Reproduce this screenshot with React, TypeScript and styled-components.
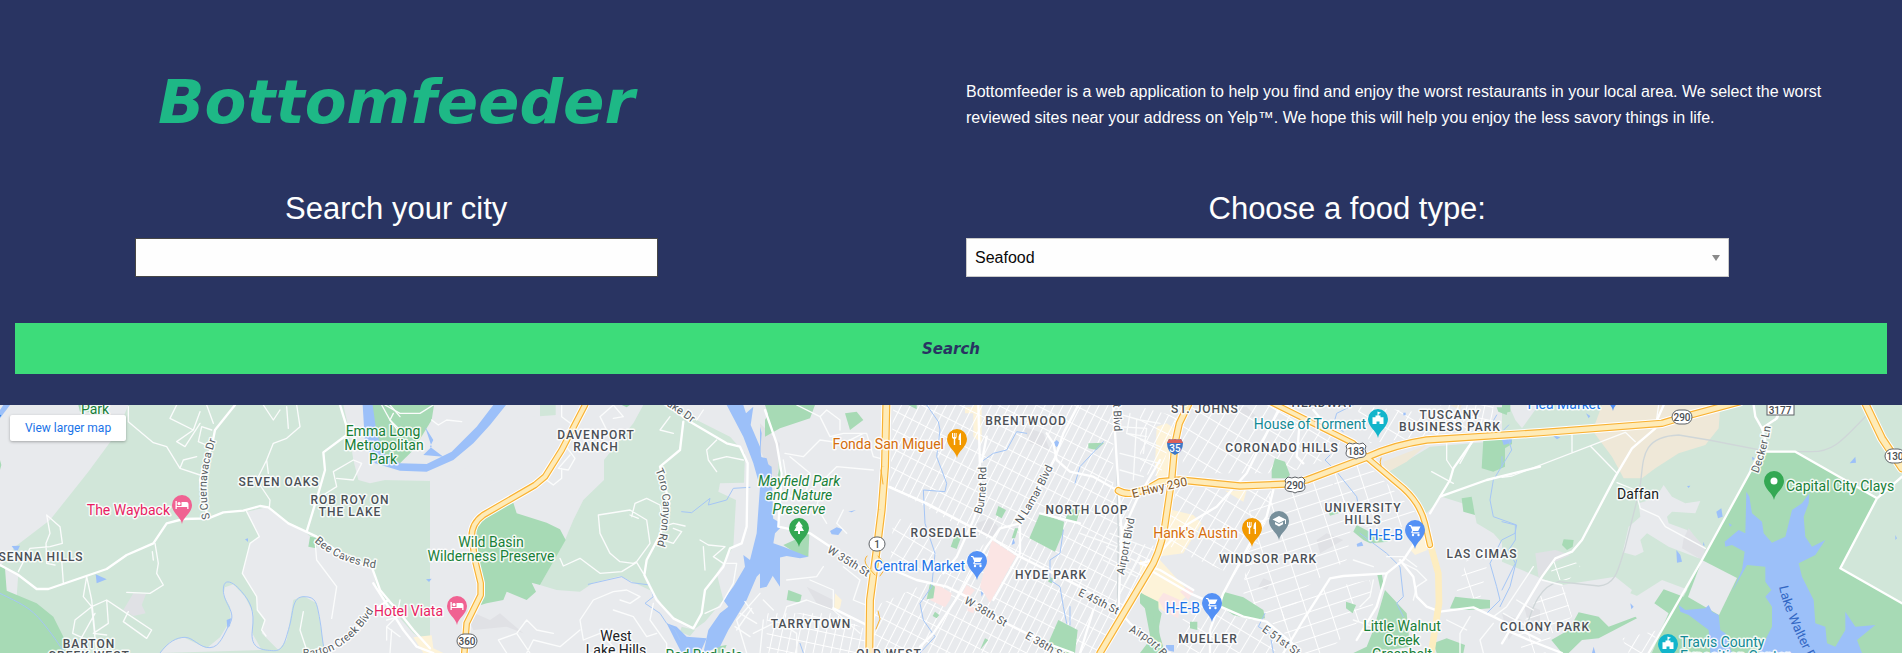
import React from 'react';
import styled, { createGlobalStyle } from 'styled-components';

const GlobalStyle = createGlobalStyle`
  *, *::before, *::after { box-sizing: border-box; }
  body {
    margin: 0;
    background: #293462;
    color: #fefefe;
    font-family: "Liberation Sans", Arial, sans-serif;
    font-size: 16px;
  }
`;

const Page = styled.div`
  display: flex;
  flex-direction: column;
  min-height: 100vh;
`;

const Form = styled.form`
  padding: 52px 0 31px;
`;

const Row = styled.div`
  display: grid;
  grid-template-columns: repeat(12, 1fr);
`;

const Cell = styled.div<{ $start: number; $span: number }>`
  grid-column: ${(p) => p.$start} / span ${(p) => p.$span};
  padding: 0 15px;
  text-align: center;
`;

const Logo = styled.h1`
  margin: 0;
  color: #1eb886;
  font: italic 700 61px/100px "DejaVu Sans", sans-serif;
`;

const Intro = styled.p`
  margin: 27px 0 25px;
  line-height: 26px;
  text-align: left;
`;

const FieldLabel = styled.label`
  display: block;
  margin: 32px 0 8px;
  font-size: 31px;
  line-height: 42px;
`;

const CityInput = styled.input`
  display: block;
  width: calc(68% + 4px);
  height: 39px;
  margin: 0 auto;
  padding: 8px;
  border: 1px solid #464646;
  border-radius: 0;
  background: #fefefe;
  color: #0a0a0a;
  font: inherit;
`;

const SelectBox = styled.div`
  position: relative;
  &::after {
    content: '';
    position: absolute;
    right: 9px;
    top: 17px;
    border: solid transparent;
    border-width: 6px 4px 0;
    border-top-color: #8a8a8a;
    pointer-events: none;
  }
`;

const FoodSelect = styled.select`
  display: block;
  appearance: none;
  width: 100%;
  height: 39px;
  padding: 0 24px 0 8px;
  border: 1px solid #cacaca;
  border-radius: 0;
  background: #fefefe;
  color: #0a0a0a;
  font: inherit;
`;

const SearchButton = styled.button`
  display: block;
  width: calc(100% - 30px);
  height: 51px;
  margin: 46px 15px 0;
  border: 0;
  background: #3ddc7a;
  color: #293462;
  font: italic 700 15px "DejaVu Sans", sans-serif;
  cursor: pointer;
`;

const MapFrame = styled.section`
  position: relative;
  flex: 1;
  min-height: 248px;
  overflow: hidden;
  background: #e8eaed;
`;

const MapSvg = styled.svg`
  position: absolute;
  inset: 0;
  width: 100%;
  height: 100%;
`;

const LargerMapLink = styled.a`
  position: absolute;
  left: 10px;
  top: 10px;
  width: 116px;
  border-radius: 2px;
  background: #fff;
  box-shadow: 0 1px 3px rgba(0, 0, 0, 0.3);
  color: #1a73e8;
  font: 12px/26px Roboto, sans-serif;
  text-align: center;
  text-decoration: none;
`;

type LabelKind = 'hood' | 'town' | 'park' | 'food' | 'shop' | 'hotel' | 'fun' | 'road' | 'highway' | 'water';

const labelColor: Record<LabelKind, string> = {
  hood: '#4b5056', town: '#202124', park: '#188038', food: '#d56e0c', shop: '#1a73e8',
  hotel: '#e91e63', fun: '#128a96', road: '#565b60', highway: '#80551f', water: '#3267c4',
};

const labelSize: Record<LabelKind, number> = {
  hood: 12, town: 14, park: 14, food: 14, shop: 14, hotel: 14, fun: 14, road: 11, highway: 12, water: 13,
};

const MapText = styled.text<{ $kind: LabelKind; $italic?: boolean }>`
  fill: ${(p) => labelColor[p.$kind]};
  font-family: Roboto, sans-serif;
  font-size: ${(p) => labelSize[p.$kind]}px;
  font-weight: ${(p) => (p.$kind === 'hood' ? 500 : 400)};
  font-style: ${(p) => (p.$italic ? 'italic' : 'normal')};
  letter-spacing: ${(p) => (p.$kind === 'hood' ? '1px' : 'normal')};
  stroke: ${(p) => (p.$kind === 'water' ? 'none' : '#fff')};
  stroke-width: 3px;
  stroke-linejoin: round;
  stroke-opacity: 0.85;
  paint-order: stroke;
`;

const ShieldText = styled.text<{ $light?: boolean }>`
  fill: ${(p) => (p.$light ? '#fff' : '#4a4e52')};
  stroke: none;
  font: 500 10px Roboto, sans-serif;
  text-anchor: middle;
`;

/* Map features are surveyed on five sheets, each at three units to the pixel. */
type Sheet = {
  x: number;
  light?: string[]; land?: string[]; tan?: string[]; built?: string[]; clinic?: string[]; sand?: string[];
  park?: string[]; water?: string[]; creek?: string[]; grid?: [string, string][];
  lane?: string[]; street?: string[]; rail?: string[];
};

const sheets: Sheet[] = [
  {
    x: 0,
    light: ['M385 15L350 100 265 215 150 360 45 440 0 500V759H1290V15Z'],
    land: [
      'M1030 15L1045 80 1060 180 1075 240 1110 250 1210 228V15Z',
      'M700 553L735 590 760 640 757 700 785 750 480 759 510 725 550 712 620 745 660 712 692 660 690 620 670 585 675 562Z',
      'M740 335L778 410 750 430 727 520 770 590 772 630 795 660 785 700 835 750 860 720 880 600 910 588 950 610 975 759H1320L1240 700 1170 620 1130 560 1115 500 1050 480 950 430 920 400 860 370 800 322Z',
      'M10 500L55 520 50 590 20 575Z',
      'M0 15H20L12 45 0 55Z',
    ],
    built: ['M400 580L438 582 425 615 437 640 400 648 370 630Z'],
    park: [
      'M0 500L15 505 20 572 110 610 160 650 195 720 200 759H0Z',
      'M235 15H300L325 40 240 35Z', 'M930 410L955 415 948 445 925 440Z', 'M335 110L320 122H360Z',
      'M0 180L4 195 0 210Z',
    ],
    water: ['M35 438L60 437 50 458Z', 'M287 523L320 538 290 550Z', 'M735 418L744 415 744 426Z', 'M0 30L10 15H30L0 55Z', 'M680 660L693 655 690 678 682 685Z'],
    creek: [
      'M0 580C60 610 90 620 130 670S180 740 195 759', 'M480 759C505 725 530 712 555 712S600 745 630 743 670 705 690 670 670 610 670 570 700 545 725 575 765 630 757 690 790 750 820 752 855 725 868 680 875 590 912 590 950 610 958 650 965 720 975 759',
    ],
    lane: [
      'M385 20V65L460 128 500 140 540 205 600 225M540 205L550 180 590 170M530 15L510 55 580 90 600 35M580 90L530 125 555 140 600 70M620 15L640 70M605 80L595 125 630 140M605 80L635 90',
      'M890 15L900 80 860 115 820 130 800 180 805 220M860 20L865 85M790 15L820 60 840 30M800 180L770 240 810 300 808 322',
      'M140 345L180 380 187 430 150 440 90 445 55 515M140 345L150 400 138 430 140 490 165 495M185 480L190 548M465 430L475 490 470 520 490 555 450 580 380 577 M460 480L457 455',
      'M260 530L250 590 275 620 290 759M260 530L275 600 285 700M275 620L225 660 218 700 245 712 285 640M275 620L320 600 380 640 455 690 440 715 370 665 385 635M320 600L325 670 280 700 320 705',
      'M740 335L778 410 750 430 727 520 770 590 772 630 795 660 785 690 798 708M945 420L950 480 1010 560 995 655M910 635L900 690 920 750M1160 660L1200 650M1170 759L1175 690',
      'M970 285L1010 260 1000 215 1060 180 1085 190 1060 240 1010 235M1145 15L1170 60 1200 90M1170 15L1200 50',
    ],
    street: [
      'M0 495L55 525 110 567 145 567 320 507 380 465 460 430 500 370 550 357 625 355 670 337 730 332 780 318 805 322 865 370 950 410 1050 480 1115 500 1140 570 1165 600 1200 640 1240 690 1290 745',
      'M625 355L610 300 600 240 615 190 635 140 645 90 705 15', 'M1020 15L1040 80 1040 105 970 157 975 210 955 280 920 395', 'M1165 600L1110 640 1060 700 980 759',
    ],
  },
  {
    x: 380,
    light: [
      'M320 105L370 65 415 15H527V45L385 190Z',
      'M790 15L760 70 715 125 672 180V240L610 300 580 360 555 420 480 555 530 570 600 575 640 548 720 528 820 575 850 620 900 670 940 690 975 665 1030 600 1010 520 1060 440 1068 300 1015 275 1020 250 1092 248 1095 160 1050 110 950 60 880 15Z',
      'M155 60L230 15 265 70 180 150Z', 'M905 680L945 690 930 708 900 695Z',
    ],
    land: [
      'M0 240L155 243 210 235 300 175 318 185V230L245 285V320L220 340 215 460 230 545 190 555 205 585 280 625 245 759H480V15H140L50 180 0 190Z',
      'M318 60L530 45 550 250 320 240Z',
    ],
    sand: ['M100 712L155 706 160 745 190 759H130Z'],
    built: ['M250 625L330 660 360 640 430 700 380 680 280 690Z'],
    park: [
      'M-35 15H162L155 60 100 150 60 190 -20 180 -45 120Z', 'M400 308L410 340 500 368 540 388 557 420 480 555 455 548 468 575 440 600 380 575 370 600 320 610 270 625 302 560 280 480 290 350Z',
      'M1155 15H1200V80L1170 60Z', 'M725 15H750L740 22Z', 'M1010 740L1040 735 1030 759H1000Z',
    ],
    water: [
      'M-52 15H-22L-10 100 15 165 60 190 140 192 215 155 290 80 340 15H378L330 75 280 130 220 180 140 215 60 212 -15 190 -45 130Z',
      'M1040 15H1090L1098 40 1120 20 1112 75 1140 140 1145 180 1175 200 1180 380 1165 450 1172 480 1200 455V560L1160 500 1130 530 1100 600 1045 690 1020 740 970 759 985 690 1020 640 1045 620 1030 600 1060 560 1095 500 1090 465 1110 480 1130 400 1140 260 1120 190 1090 110Z',
      'M138 538L155 536 147 546Z', 'M1060 560H1080V570H1055Z', 'M135 80L160 120 150 140 190 170 130 165 155 140Z', 'M860 670L890 680 920 710 980 715 960 759H905L885 720Z',
    ],
    creek: ['M905 335L935 338 990 295 985 315 1040 300 1060 265 1110 262', 'M625 553L725 530 755 548 810 555 820 590 795 610 840 640 860 670 885 690 900 720'],
    lane: [
      'M545 15V50L585 80 540 100M660 50L700 15 730 50 700 55M660 50L680 90M555 135L585 175 565 210 535 205 570 165M500 240L520 255 545 235 545 205M15 15L60 40 120 40 160 15M155 60L175 75 200 60 245 65M60 100L30 60 40 40',
      'M755 350L765 310 800 295 840 315 850 380M655 345L750 330 800 360 810 430 770 485 760 490 720 485 690 460 660 400ZM750 345L775 355M850 380L880 370 915 378M850 420L880 430 905 395 880 385M540 475L550 498 600 475 660 520 725 515 770 487 790 520M960 420L985 435 1035 440 1000 470 1030 490M970 440L975 510M1010 120L980 150 985 180 1010 215M1000 180L1040 170 1090 180M880 100L840 90 870 50M950 60L970 30',
      'M1040 490L1070 490 1060 550 1020 620 975 640M600 660L640 600 700 575 740 570 780 590 750 610 720 600M600 660L610 720 660 700 700 740M380 759L355 720 410 700 440 660 470 690 520 700M440 759L460 720 540 740 600 690M820 610L810 660 860 730 860 759M700 630L760 650 800 710 830 700M410 700L450 759',
      'M1115 625L1070 690M1095 605L1120 640M1080 640L1130 670M1065 680L1110 710M1140 580L1070 660 1100 759M1150 600L1180 630M1120 700L1180 670M1140 759L1150 660',
      'M20 680L50 650 60 600M0 640L30 620M20 720L20 680 60 710',
    ],
    street: ['M860 15L930 65 1040 130 1080 140 1103 190 1100 380 1085 430 1050 445 1030 500 975 570 965 640 940 685 880 655 830 600 793 525 800 480 840 405 868 310 840 200 900 150 910 65', 'M-20 550L70 690 110 740 160 759'],
  },
  {
    x: 760,
    light: ['M50 130L70 220 60 240 50 200Z'],
    built: ['M650 370L690 355 715 380 700 410 650 400ZM140 560L220 600 230 640 170 610ZM790 80L850 100 870 150 810 130Z', 'M0 70L60 130 50 250 0 150Z'],
    sand: ['M225 580L245 600 240 625 222 635ZM640 15H665V130L640 110ZM615 22H640V40H615ZM1190 120H1240V250H1190ZM1140 500L1200 480 1290 580 1220 640 1160 600Z'],
    clinic: ['M695 420L768 468 690 608 660 560Z', 'M525 550L575 580 570 600 555 622 510 600Z', 'M620 555L645 570 620 600 605 585ZM625 615L645 625 640 640 622 632Z'],
    park: [
      'M40 15H165L150 55 60 85 15 110 15 60Z', 'M255 40L290 35 310 60 270 90Z', 'M148 400L145 470 115 465 70 435Z', 'M85 570L125 585 120 608 80 600Z', 'M840 340L912 365 908 400 885 455 808 415Z',
      'M715 318L738 330 725 355 707 345Z', 'M585 405L602 415 590 447 572 440Z', 'M765 385H775L765 415H755Z', 'M895 660L953 690 945 759H910L862 735Z', 'M510 550L525 560 520 595 500 598Z', 'M985 130L1033 128 1010 150 985 145Z', 'M930 325L960 330 950 365 915 360Z', 'M445 15H470V28Z', 'M525 635L538 645 530 655 518 648ZM865 530L880 535 875 550 865 545Z', 'M675 715L685 720 660 750Z', 'M60 205L68 225 60 245 53 225Z', 'M1135 575L1195 605 1200 759H1180L1150 600Z',
    ],
    water: ['M0 80L5 100 0 170 20 175 35 230 30 350 55 365 60 385 45 400 40 430 70 440 145 470 120 475 80 468 50 475 45 515 20 560 0 565Z', 'M210 393L230 382 248 388 235 405 215 403Z', 'M880 130L890 120 900 130 890 142Z', 'M760 415L765 430 755 435ZM662 572L670 580 665 590Z', 'M265 335L288 330 275 337Z'],
    creek: ['M500 15L535 65 540 90 530 170 560 250 555 275 490 270 495 370 525 460 515 560 480 610 490 660 525 710 480 759', 'M800 100L770 95 740 150 700 160 665 185', 'M1030 125L960 200 945 250', 'M910 390L900 460 870 480 870 540 900 560 910 620 920 670M930 620L930 675', 'M130 759L120 730'],
    grid: [
      ['a', 'M400 15H1060V270L1120 290 1080 420 1200 440 1010 759H340V620L520 540 690 420 600 380 390 260Z'],
      ['c', 'M20 640L220 640 320 690V759H20Z'],
      ['b', 'M400 350L550 400 510 520 390 500Z'],
    ],
    lane: [
      'M110 15L180 50 210 110 250 100 320 100 340 170 360 175M75 160L130 170 180 120 250 130 310 100M180 50L200 30 240 60 240 90M70 180L80 240 90 290 140 270 150 220 90 170M200 370L170 320 190 240 230 200 340 210M250 330L230 370 260 400M190 500L170 530 80 540M300 700L220 630 220 570 150 540M250 500L300 540 280 600 330 620M110 759V700L65 670 80 620 140 600 220 630',
      'M1080 15L1070 40 1140 60 1200 70M1110 40L1100 100 1200 140M1070 80L1160 85 1150 160M1080 160L1200 190M1130 60L1120 240M1080 210L1150 230M1100 100L1160 110',
      'M1140 470L1080 580M1050 400L1180 450M1040 440L1160 500M1030 480L1130 530M960 400L1070 440',
    ],
    street: [
      'M15 30L50 130 65 220 55 380 150 400 240 460 310 510 400 510 470 540 560 560 620 590 735 668 860 730 940 759', 'M655 15L660 210 665 290 640 360 590 470 550 520M665 185L680 110',
      'M955 15L910 100 885 175 830 280 780 370 720 385 680 440 600 580 520 700 480 740', 'M860 100L880 130 890 180 930 215 1000 230 1070 270', 'M385 260L500 310 690 410 780 470 960 560 1070 625 1110 670 1200 740', 'M1060 15L1070 180 1085 400 1075 640', 'M1200 180L1130 300 1085 400', 'M780 370L780 460 700 600', 'M840 340L960 370', 'M220 625L330 680', 'M1000 630L960 759',
    ],
    rail: ['M1070 200L1075 400 1072 640'],
  },
  {
    x: 1140,
    light: ['M745 215L870 140 1290 105V500H1180L1150 500 1060 400 1010 370 1000 320 905 290 860 340 820 300Z'],
    tan: ['M730 185L860 135 800 185 740 218Z', 'M930 15H965L960 30Z'],
    sand: ['M50 80L80 70 110 90 95 220 45 200Z', 'M75 325L160 345 185 370 130 460 50 470Z', 'M255 272H320L310 305Z', 'M15 510L100 550 60 620 0 590Z', 'M830 400L850 400 862 450 825 465 812 450Z', 'M0 480L50 500 0 560Z'],
    clinic: ['M70 578L120 600 115 655 75 635 55 600ZM120 575L140 562 160 575 145 600Z'],
    built: ['M530 420L560 400 610 420 540 460ZM370 535L395 545 380 570 355 560ZM255 25L320 20 360 60Z', 'M1150 610L1200 630V680L1160 650Z'],
    park: [
      'M405 175L435 185 450 225 440 235 395 235V210Z', 'M250 575L310 592 370 630 375 655 340 660 280 645 245 620Z', 'M712 525L725 520 732 560 722 570Z', 'M735 570L800 640 810 740 690 759H640L680 740 700 690Z', 'M650 375L745 425 690 430 670 420 640 395Z',
      'M1030 120H1095V200L1060 215 1025 205Z', 'M965 295L995 290 1005 345 970 335Z', 'M945 590L985 595 1050 600 1050 625 985 630 930 625Z', 'M880 730L920 715 975 735 970 759H890Z', 'M0 575L30 600 65 640 55 690 75 759H0L45 700 40 650 0 610Z', 'M150 665H172V690L150 685Z', 'M1070 22H1105L1100 45 1075 35Z', 'M565 335L610 335 570 347Z', 'M618 605L648 615 638 640 618 625Z',
    ],
    water: ['M650 432L665 425 670 437 652 440Z', 'M790 38H797V46H790Z', 'M78 735H102V755L78 750Z'],
    creek: ['M640 15L590 40 580 75 610 95M570 165L555 180 590 215 650 290 655 315 700 320M660 400L740 460 780 500 790 590 770 610 790 650', 'M1070 45L1050 80 1100 100 1115 150 1060 240 1050 300 1060 350 1130 375 1125 400 1085 420 1050 490 1070 560 1080 600 1040 640M1130 480L1110 560 1080 620', 'M375 640L355 680 390 700 400 759'],
    grid: [
      ['b', 'M120 15H390L600 120 600 165 440 220 130 220Z'], ['b', 'M110 260L420 275 390 330 320 540 150 470 70 430 100 310Z'], ['d', 'M330 300L560 230 640 330 620 480 500 560 420 690 310 590Z'],
      ['d', 'M560 200L680 190 830 340 820 380 640 380Z'], ['b', 'M160 600L240 620 340 665 430 720 400 759H110V690Z'], ['d', 'M420 590L690 540 700 620 560 759H440Z'],
      ['b', 'M650 20L690 20 860 40 1040 60 1020 90 840 110 690 130Z'], ['d', 'M980 480L1040 500 1020 600 945 590Z'], ['c', 'M900 15L930 60 1060 80 1060 15Z'], ['a', 'M0 20L110 50 60 230 0 220Z'],
    ],
    lane: [
      'M790 490L830 510 860 540 830 560 820 600M830 500L790 470 740 470M640 480L700 500M920 130V180L940 210M875 215L940 250M1000 120L960 190M700 540L690 590 660 620M640 660L700 680M990 650L960 700 960 759M1060 670L1020 720 1030 759M920 660L980 690',
      'M1180 500L1100 620 1060 650M1130 600L1180 630M1090 640L1200 700',
    ],
    street: [
      'M430 0L370 120 320 220 230 320 130 380 40 480 0 490', 'M400 270L380 350 330 430 250 580 210 690 210 759', 'M30 510L150 580 310 650 380 665 480 750', 'M430 759L490 660 570 535 610 528 740 520 790 480 830 420', 'M0 490L60 510 160 570', 'M740 520L710 620 650 720', 'M780 480L820 530 830 590 860 620 900 635 1000 622 1060 650 1200 720', 'M870 340L930 240 940 205 1000 120', 'M900 290L1040 240 1200 200', 'M490 190L470 170 480 60 440 15M520 30L570 90',
    ],
  },
  {
    x: 1502,
    light: ['M0 15H1200V759H0Z'],
    land: [
      'M0 485L130 540 180 555 340 530 390 570 385 580 460 610 500 640 440 759H0Z', 'M485 255L510 290 550 310 595 303 580 340 510 335 495 350 500 370 555 390 600 445 590 475 500 440 435 400 415 420 425 455 400 467 362 457 380 380 415 350 410 310 460 295Z', 'M20 15H110L60 85 40 60Z', 'M370 610L480 540 560 570 520 600 480 610Z',
    ],
    tan: ['M300 15H655L650 85 610 135 530 160 460 205 420 235H365L330 170 270 90 280 70Z'],
    built: ['M100 460L160 450 205 465 150 490 110 535Z', 'M545 415L560 385 575 405 610 445 600 480 540 445Z', 'M0 640L60 660 20 720Z'],
    park: [
      'M790 155H880L1125 295 1015 505 1200 610V759H450L500 640 457 610 485 568 545 590 600 480 740 220Z', 'M185 418L215 420 212 440 195 450 180 435Z', 'M230 637L290 650 320 680 400 650 405 655 290 715 240 720 200 759H180L148 720 200 690Z', 'M0 15H25V35L0 40Z', 'M0 120H30V132L0 150Z',
    ],
    water: [
      'M733 275L742 290 750 340 780 365 785 400 810 428 850 410 870 330 900 310 922 280 920 310 905 350 910 410 930 440 970 420 940 465 890 490 900 530 935 600 940 670 970 680 975 730 1000 740 1030 690 1030 635 1060 680 1120 675 1065 720 1080 759H770L810 680 810 620 790 590 808 570 790 545 790 500 735 495 690 575 720 510 728 455 690 435 670 440 668 425 710 390 730 400Z',
      'M530 615L550 630 610 625 620 615 630 635 650 645 655 690 670 700 690 759H625L620 690 560 645 535 635Z', 'M643 335L658 325 662 350 648 355Z', 'M523 450L535 465 540 485 525 488Z', 'M1043 190L1060 170 1062 188Z', 'M150 105L175 112 165 118Z', 'M385 610L395 620 388 628Z', 'M252 40L265 48 260 55ZM555 258L565 257 560 264ZM680 370L690 375 684 380ZM750 170L758 175 752 182ZM1180 405L1185 415 1180 420ZM605 425L608 437 603 436Z', 'M0 120L30 115 28 128 5 135Z', 'M275 740L280 759H270Z',
    ],
    creek: ['M0 365L40 375 40 420 20 450 40 490 0 570', 'M20 75L0 95', 'M0 170V200'],
    grid: [['d', 'M150 490L200 465 235 500 200 540 145 540Z'], ['d', 'M145 560L185 560 210 650 150 700 130 759H60L50 700 100 600Z'], ['b', 'M360 715L430 700 470 690 440 759H380Z']],
    lane: ['M210 98V155M265 138L345 220M0 232L30 228 370 97 400 125M345 248L400 270 415 325 470 350 490 380 610 445M460 85L470 15M120 540L180 555M820 60L825 45'],
    street: ['M485 15L465 60 460 85 390 145 340 230 240 420 210 455 160 475 120 530 0 730', 'M755 15L760 50 780 85 790 120 745 215 600 480 520 620 440 759', 'M780 85L825 55 830 40', 'M790 155H880L1125 295 1200 230M1125 295L1015 505 1200 610', 'M0 685L80 720 180 759'],
    rail: ['M1090 50C1030 110 1000 155 930 155H800L620 120 530 105C400 110 430 200 410 280L370 440C350 500 345 555 290 558L170 545C110 560 90 630 80 660'],
  },
];

type Layer = Exclude<keyof Sheet, 'x' | 'grid'>;

const Shapes = ({ layer, fill }: { layer: Layer; fill: string }) => (
  <g fill={fill}>
    {sheets.map((s) => (
      <g key={s.x} transform={`translate(${s.x} 400) scale(${1 / 3})`}>
        {(s[layer] ?? []).map((d) => <path key={d} d={d} />)}
      </g>
    ))}
  </g>
);

const Lines = ({ layer, stroke, width }: { layer: Layer; stroke: string; width: number }) => (
  <g fill="none" stroke={stroke} strokeWidth={width} strokeLinejoin="round" strokeLinecap="round">
    {sheets.map((s) => (
      <g key={s.x} transform={`translate(${s.x} 400) scale(${1 / 3})`}>
        {(s[layer] ?? []).map((d) => <path key={d} d={d} />)}
      </g>
    ))}
  </g>
);

const Grids = () => (
  <>
    {sheets.map((s) => (
      <g key={s.x} transform={`translate(${s.x} 400) scale(${1 / 3})`}>
        {(s.grid ?? []).map(([id, d]) => <path key={d} d={d} fill={`url(#blocks-${id})`} />)}
      </g>
    ))}
  </>
);

const highways: [number, string, number][] = [
  [380, 'M615 15L545 150 495 230 465 255 310 345Q275 370 275 410L285 480 302 550V585L260 670 253 759', 18],
  [760, 'M379 15L375 200 365 330 350 450 330 600 328 759', 22],
  [1140, 'M152 0L118 70 105 130 95 240 80 340Q70 430 40 490L-120 759', 20],
  [1140, 'M-65 272Q-50 282 -25 280L20 268 60 245 120 240 300 258 440 252 500 240 680 172Q760 135 860 120L1200 98 1566 70 1626 52 1800 5', 20],
  [1140, 'M380 0L640 130 680 172 790 265Q840 310 855 370L870 435', 17],
  [1502, 'M1085 0L1140 115 1200 205', 22],
];

const Highways = () => (
  <g fill="none" strokeLinejoin="round" strokeLinecap="round">
    <path transform="translate(1140 400) scale(0.33333)" d="M870 430L895 520 897 610 872 770" stroke="#fdedc0" strokeWidth="20" />
    {[['#fff', 8], ['#f9b233', 2], ['#feebb8', -5]].map(([color, grow]) => (
      <g key={color} stroke={String(color)}>
        {highways.map(([x, d, w]) => (
          <path key={d} d={d} strokeWidth={w + Number(grow)} transform={`translate(${x} 400) scale(0.33333)`} />
        ))}
      </g>
    ))}
    <g stroke="#f9b233" strokeWidth="1">
      <path d="M867 556q-4 4 0 10l8 9M878 556q12 10 2 20M881 470l2 14M878 611l2 8-4 10M1381 458q-2 4 0 8" />
    </g>
  </g>
);

type Label = [LabelKind, number, number, string, ('start' | 'middle' | 'end')?, boolean?];

const labels: Label[] = [
  ['park', 95, 414, 'Park'], ['park', 383, 436, 'Emma Long'], ['park', 384, 450, 'Metropolitan'], ['park', 383, 464, 'Park'],
  ['hood', 279, 486, 'SEVEN OAKS'], ['hood', 350, 504, 'ROB ROY ON'], ['hood', 350, 516, 'THE LAKE'], ['hood', 41, 561, 'SENNA HILLS'],
  ['hood', 89, 648, 'BARTON'], ['hood', 89, 660, 'CREEK WEST'], ['hotel', 170, 515, 'The Wayback', 'end'], ['hotel', 443, 616, 'Hotel Viata', 'end'],
  ['hood', 596, 439, 'DAVENPORT'], ['hood', 596, 451, 'RANCH'], ['park', 491, 547, 'Wild Basin'], ['park', 491, 561, 'Wilderness Preserve'],
  ['town', 616, 641, 'West'], ['town', 616, 655, 'Lake Hills'], ['park', 704, 660, 'Red Bud Isle'],
  ['park', 799, 486, 'Mayfield Park', 'middle', true], ['park', 799, 500, 'and Nature', 'middle', true], ['park', 799, 514, 'Preserve', 'middle', true],
  ['food', 944, 449, 'Fonda San Miguel', 'end'], ['hood', 1026, 425, 'BRENTWOOD'], ['hood', 944, 537, 'ROSEDALE'], ['shop', 965, 571, 'Central Market', 'end'],
  ['hood', 1051, 579, 'HYDE PARK'], ['hood', 1087, 514, 'NORTH LOOP'], ['hood', 811, 628, 'TARRYTOWN'], ['hood', 889, 658, 'OLD WEST'],
  ['hood', 1205, 413, 'ST. JOHNS'], ['hood', 1323, 407, 'HEADWAY'], ['fun', 1366, 429, 'House of Torment', 'end'], ['hood', 1450, 419, 'TUSCANY'],
  ['hood', 1450, 431, 'BUSINESS PARK'], ['hood', 1282, 452, 'CORONADO HILLS'], ['hood', 1363, 512, 'UNIVERSITY'], ['hood', 1363, 524, 'HILLS'],
  ['food', 1238, 538, 'Hank\'s Austin', 'end'], ['shop', 1403, 540, 'H-E-B', 'end'], ['hood', 1268, 563, 'WINDSOR PARK'], ['hood', 1482, 558, 'LAS CIMAS'],
  ['shop', 1200, 613, 'H-E-B', 'end'], ['hood', 1208, 643, 'MUELLER'], ['park', 1402, 631, 'Little Walnut'], ['park', 1402, 645, 'Creek'], ['park', 1402, 659, 'Greenbelt'],
  ['hood', 1545, 631, 'COLONY PARK'], ['shop', 1564, 409, 'Flea Market'], ['town', 1638, 499, 'Daffan'], ['park', 1786, 491, 'Capital City Clays', 'start'],
  ['fun', 1680, 647, 'Travis County', 'start'], ['fun', 1680, 661, 'Exposition Center', 'start'],
];

const curved: [LabelKind, string, string][] = [
  ['road', 'S Cuernavaca Dr', 'M209 519Q200 480 215 440L219 426'], ['road', 'Bee Caves Rd', 'M315 541Q338 562 375 567L390 571'], ['road', 'Barton Creek Blvd', 'M303 656Q343 656 371 613L385 592'],
  ['road', 'Lake Dr', 'M662 401L704 430'], ['road', 'Toro Canyon Rd', 'M656 470Q670 500 659 542L655 556'], ['road', 'Burnet Rd', 'M980 514Q986 500 985 466L985 450'],
  ['road', 'N Lamar Blvd', 'M1020 524Q1034 505 1052 467L1062 446'], ['road', 'W 35th St', 'M827 551L882 585'], ['road', 'W 38th St', 'M964 602L1024 637'],
  ['road', 'E 38th St', 'M1025 637L1084 671'], ['road', 'E 45th St', 'M1078 594L1140 625'], ['road', 'Airport Blvd', 'M1123 575L1137 500'],
  ['road', 'Airport Blvd', 'M1113 374L1116 450'], ['road', 'Airport Blvd', 'M1129 631Q1160 642 1184 690'], ['road', 'E 51st St', 'M1262 630L1315 668'], ['highway', 'E Hwy 290', 'M1133 497Q1160 490 1200 482'],
  ['road', 'Decker Ln', 'M1757 473Q1768 446 1772 410'], ['water', 'Lake Walter E Long', 'M1779 587Q1785 620 1830 700'], ['water', 'Lake Austin', 'M-44 465L34 380'],
];

type Glyph = 'bed' | 'food' | 'cart' | 'tree' | 'castle' | 'school' | 'dot';

const glyphs: Record<Glyph, React.ReactNode> = {
  bed: <path d="M-6.500-4v8h1.300V2h10.400v2h1.300V-1Q6.500-3 4.500-3H-.5v4h-4.700v-5zM-3-3a1.600 1.600 0 1 0 .1 0z" />,
  food: <path d="M-5-6h1v4h.8v-4h1v4h.8v-4h1v4Q-.4-.4-1.800 0v6h-1.400V0Q-5-.4-5-2zM1.500 0Q1.500-5.500 4-6V6H2.600V1H1.500z" />,
  cart: <><path d="M-6-5h2.200l.8 1.500h8.500L3.200 1h-5l-.8 1.300h7V3.500h-7q-1.800-.4-.9-2L-2.800.2-4.700-4H-6z" /><circle cx="-2" cy="5" r="1.200" /><circle cx="3.500" cy="5" r="1.200" /></>,
  tree: <path d="M0-7l4 5.500H2.500L5 3H1v3h-2V3h-4l2.500-4.500H-4z" />,
  castle: <path d="M-.5-7.500L3-6.300.6-5v1.500H2.500v1.800H5.500V5H1.500V2.500h-3V5h-4v-6.700H-2.500v-1.800h2z" />,
  school: <path d="M0-5l7 3.500V3H6V-1L0 2-6.500-1.500zM-4 1l4 2 4-2v2.300L0 5.500l-4-2.200z" />,
  dot: <circle r="3.500" />,
};

const pins: [number, number, string, Glyph][] = [
  [182, 505, '#f06292', 'bed'], [457, 606, '#f06292', 'bed'], [799, 528, '#34a853', 'tree'], [957, 439, '#f29900', 'food'], [977, 561, '#5491f5', 'cart'],
  [1378, 419, '#12b5cb', 'castle'], [1252, 528, '#f29900', 'food'], [1279, 521, '#78909c', 'school'], [1415, 530, '#5491f5', 'cart'], [1212, 603, '#5491f5', 'cart'],
  [1774, 481, '#34a853', 'dot'], [1668, 644, '#12b5cb', 'castle'], [1613, 392, '#5491f5', 'cart'],
];

const Shields = () => (
  <g fill="#fff" stroke="#5f6368">
    {[[877, 544, 8, '1'], [467, 641, 10, '360'], [1682, 417, 10, '290'], [1895, 456, 10, '130']].map(([x, y, w, n]) => (
      <g key={n} transform={`translate(${x} ${y})`}>
        <rect x={-Number(w)} y="-7" width={Number(w) * 2} height="14" rx="7" />
        <ShieldText y="4">{n}</ShieldText>
      </g>
    ))}
    {[[1295, 485, '290'], [1356, 451, '183']].map(([x, y, n]) => (
      <g key={n} transform={`translate(${x} ${y})`}>
        <path d="M-7-8Q-3-6 0-8 3-6 7-8L10-5Q8-2 10 2 10 6 5 6.500 2 6.500 0 8-2 6.500-5 6.500-10 6-10 2-8-2-10-5Z" />
        <ShieldText y="4">{n}</ShieldText>
      </g>
    ))}
    <rect x="1767" y="402" width="27" height="13" />
    <ShieldText x="1780" y="414">3177</ShieldText>
    <g transform="translate(1175 447)" stroke="none">
      <path d="M-6-8Q-3-7 0-8 3-7 6-8L8-4Q8 5 0 8-8 5-8-4Z" fill="#3c78c8" />
      <path d="M-6-8Q-3-7 0-8 3-7 6-8L8-4H-8Z" fill="#d9605a" />
      <ShieldText y="5" $light>35</ShieldText>
    </g>
  </g>
);

const blockPatterns: [string, number, number, number][] = [['a', 27, 24, 52], ['b', 31, 34, 62], ['c', 12, 26, 40], ['d', 72, 38, 70]];

const CityMap = () => (
  <MapSvg viewBox="0 405 1902 248" preserveAspectRatio="xMidYMid slice" role="img" aria-label="Map of Austin">
    <defs>
      {blockPatterns.map(([id, angle, w, h]) => (
        <pattern key={id} id={`blocks-${id}`} width={w} height={h} patternUnits="userSpaceOnUse" patternTransform={`rotate(${angle})`}>
          <path d={`M0 0H${w}M0 0V${h}`} stroke="#fff" strokeWidth="6" fill="none" />
        </pattern>
      ))}
      {curved.map(([, , d], i) => <path key={d} id={`line-${i}`} d={d} />)}
    </defs>
    <Shapes layer="light" fill="#d1e6d9" />
    <Shapes layer="land" fill="#e8eaed" />
    <Shapes layer="tan" fill="#efe8d8" />
    <Shapes layer="built" fill="#e0e1e5" />
    <Shapes layer="sand" fill="#fdf3d9" />
    <Grids />
    <Shapes layer="clinic" fill="#fbe5e4" />
    <Shapes layer="park" fill="#a7dab5" />
    <path fill="#e8eaed" d="M1702 560L1737 578 1719 615 1688 597Z" />
    <Shapes layer="water" fill="#9cc0f9" />
    <Lines layer="creek" stroke="#a5c6f6" width={3} />
    <Lines layer="rail" stroke="#cfd6d8" width={4} />
    <Lines layer="lane" stroke="#fbfcfc" width={4} />
    <Lines layer="street" stroke="#fff" width={7} />
    <Highways />
    {curved.map(([kind, text], i) => (
      <MapText key={i} $kind={kind} dy={kind === 'water' ? 0 : 1}><textPath href={`#line-${i}`}>{text}</textPath></MapText>
    ))}
    {labels.map(([kind, x, y, text, anchor = 'middle', italic]) => (
      <MapText key={`${x}-${y}`} $kind={kind} $italic={italic} x={x} y={y} textAnchor={anchor}>{text}</MapText>
    ))}
    <Shields />
    {pins.map(([x, y, color, glyph]) => (
      <g key={`${x}-${y}`} transform={`translate(${x} ${y})`}>
        <path d="M0 19C-1 12-10 8-10 0A10 10 0 0 1 10 0C10 8 1 12 0 19Z" fill={color} />
        <g fill="#fff">{glyphs[glyph]}</g>
      </g>
    ))}
  </MapSvg>
);

export default function App() {
  return (
    <Page>
      <GlobalStyle />
      <Form onSubmit={(e) => e.preventDefault()}>
        <Row>
          <Cell $start={1} $span={5}><Logo>Bottomfeeder</Logo></Cell>
          <Cell $start={7} $span={6}>
            <Intro>
              Bottomfeeder is a web application to help you find and enjoy the worst restaurants in your local area. We
              select the worst reviewed sites near your address on Yelp™. We hope this will help you enjoy the less
              savory things in life.
            </Intro>
          </Cell>
        </Row>
        <Row>
          <Cell $start={1} $span={5}>
            <FieldLabel htmlFor="city">Search your city</FieldLabel>
            <CityInput id="city" type="text" />
          </Cell>
          <Cell $start={7} $span={5}>
            <FieldLabel htmlFor="food">Choose a food type:</FieldLabel>
            <SelectBox>
              <FoodSelect id="food" defaultValue="Seafood">
                <option>Seafood</option>
              </FoodSelect>
            </SelectBox>
          </Cell>
        </Row>
        <SearchButton type="submit">Search</SearchButton>
      </Form>
      <MapFrame>
        <CityMap />
        <LargerMapLink href="#map">View larger map</LargerMapLink>
      </MapFrame>
    </Page>
  );
}
